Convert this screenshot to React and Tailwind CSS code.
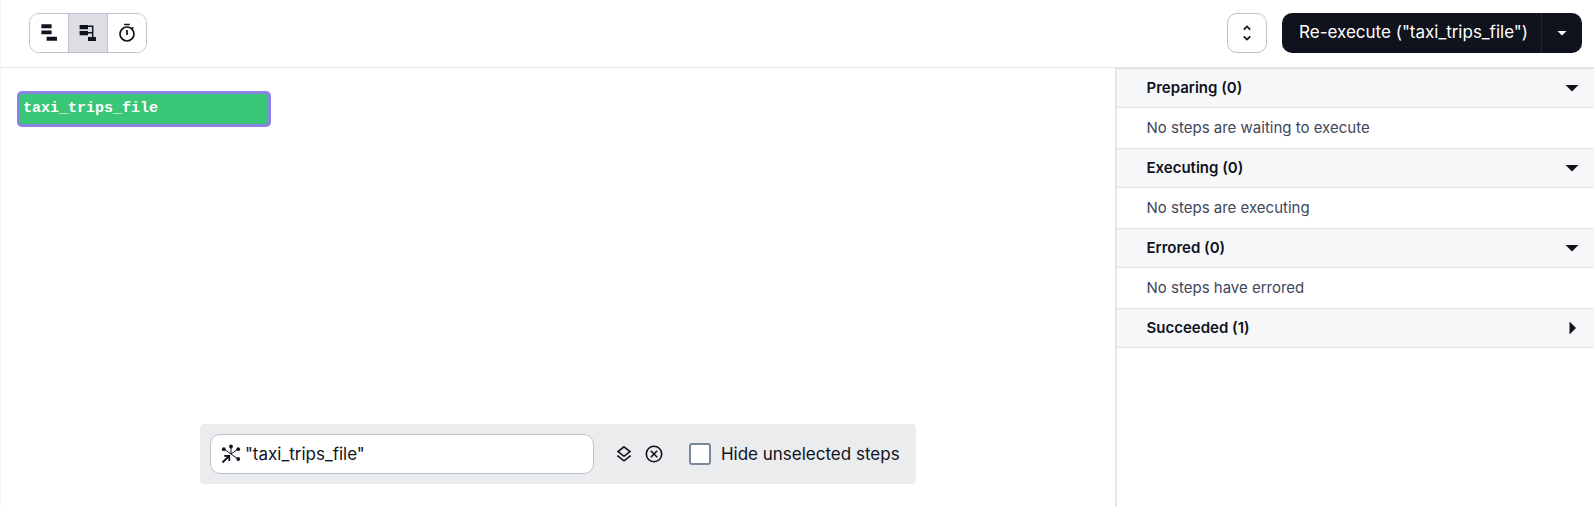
import { useState } from "react";

const INITIAL_SECTIONS = [
  { title: "Preparing", count: 0, body: "No steps are waiting to execute", open: true },
  { title: "Executing", count: 0, body: "No steps are executing", open: true },
  { title: "Errored", count: 0, body: "No steps have errored", open: true },
  { title: "Succeeded", count: 1, body: "taxi_trips_file", open: false },
];

function FlatIcon() {
  return (
    <svg width="20" height="20" viewBox="0 0 20 20" fill="currentColor" aria-hidden="true">
      <path d="M2.400 1.300h10.200v4H2.400zM2.400 7.600h10.200v3.700H2.400zM7.600 13.700H18v4H7.600z" />
    </svg>
  );
}

function WaterfallIcon() {
  return (
    <svg width="20" height="20" viewBox="0 0 20 20" aria-hidden="true">
      <path
        d="M1.600 2H10v4.300H1.600zM1.600 8H10v4.300H1.600zM10 14h8v4h-8z"
        fill="currentColor"
      />
      <path d="M10 3.300h4.700V14M10 9.700h4.700" fill="none" stroke="currentColor" strokeWidth="1.500" />
    </svg>
  );
}

function TimerIcon() {
  return (
    <svg width="20" height="20" viewBox="0 0 20 20" fill="none" stroke="currentColor" aria-hidden="true">
      <circle cx="10" cy="11" r="7" strokeWidth="1.700" />
      <path d="M7.200 1.500h5.600M10 7v5M14.800 5.600l1.600-1.200" strokeWidth="1.700" />
    </svg>
  );
}

function ExpandIcon() {
  return (
    <svg width="20" height="20" viewBox="0 0 20 20" fill="none" stroke="currentColor" strokeWidth="1.700" aria-hidden="true">
      <path d="M6.800 6.600L10 3.400l3.200 3.200M6.800 13.400l3.200 3.200 3.200-3.200" />
    </svg>
  );
}

function GraphIcon() {
  return (
    <svg width="20" height="20" viewBox="0 0 20 20" fill="none" stroke="currentColor" aria-hidden="true">
      <path d="M10 3v7l7-5M10 10l7 5M10 10L3 5" strokeWidth="1" />
      <path d="M1.500 18.500L8 12M3.200 11.800H8.300V17" strokeWidth="1.800" />
      <g fill="currentColor" stroke="none">
        <circle cx="10" cy="2.500" r="1.900" />
        <circle cx="2.800" cy="5.200" r="1.900" />
        <circle cx="17.200" cy="5.200" r="1.900" />
        <circle cx="17.200" cy="15" r="1.900" />
      </g>
    </svg>
  );
}

function LayersIcon() {
  return (
    <svg width="20" height="20" viewBox="0 0 20 20" fill="none" stroke="currentColor" strokeWidth="1.600" aria-hidden="true">
      <path d="M10 2.800l6 4.800-6 4.700-6-4.700zM3.300 11.600L10 16.800l6.700-5.200" />
    </svg>
  );
}

function ClearIcon() {
  return (
    <svg width="20" height="20" viewBox="0 0 20 20" fill="none" stroke="currentColor" strokeWidth="1.600" aria-hidden="true">
      <circle cx="10" cy="10" r="7.700" />
      <path d="M6.800 6.800l6.400 6.400M13.200 6.800l-6.400 6.400" />
    </svg>
  );
}

function Caret({ open }) {
  return (
    <svg width="20" height="20" viewBox="0 0 20 20" fill="currentColor" aria-hidden="true">
      <path d={open ? "M3.500 7h13L10 13.500z" : "M7.500 3.500v13L14 10z"} />
    </svg>
  );
}

const VIEWS = [
  { id: "flat", label: "Flat", Icon: FlatIcon },
  { id: "waterfall", label: "Waterfall", Icon: WaterfallIcon },
  { id: "timed", label: "Timed", Icon: TimerIcon },
];

function Toolbar() {
  const [view, setView] = useState("waterfall");
  return (
    <header className="flex h-[68px] shrink-0 items-center justify-between border-b border-[#e4e6ea] pr-3 pb-px pl-7">
      <div className="flex h-10 divide-x divide-[#bcc2ce] overflow-hidden rounded-[10px] border border-[#bcc2ce]">
        {VIEWS.map(({ id, label, Icon }) => (
          <button
            key={id}
            type="button"
            aria-label={label}
            aria-pressed={view === id}
            onClick={() => setView(id)}
            className={`box-content flex w-[38px] items-center justify-center ${view === id ? "bg-[#dddee4]" : "bg-white"}`}
          >
            <Icon />
          </button>
        ))}
      </div>
      <div className="flex items-center gap-[15px]">
        <button
          type="button"
          aria-label="Expand panel"
          className="flex size-10 items-center justify-center rounded-[10px] border border-[#bcc2ce] bg-white"
        >
          <ExpandIcon />
        </button>
        <div className="flex h-10 divide-x divide-[#23252f] overflow-hidden rounded-[10px] bg-[#10121d] text-white">
          <button type="button" className="w-[260px] pl-1 text-center text-[17px] whitespace-nowrap">
            Re-execute ("taxi_trips_file")
          </button>
          <button type="button" aria-label="More options" className="flex w-10 items-center justify-center">
            <svg width="20" height="20" viewBox="0 0 20 20" fill="currentColor" aria-hidden="true">
              <path d="M5.500 8h9L10 12.500z" />
            </svg>
          </button>
        </div>
      </div>
    </header>
  );
}

function StepFilter() {
  const [query, setQuery] = useState('"taxi_trips_file"');
  const [hide, setHide] = useState(false);
  return (
    <div className="flex h-[60px] items-center rounded bg-[#ebecee] pr-4 pl-[10px]">
      <label className="flex h-10 w-96 items-center gap-1 rounded-[10px] border border-[#bcc2ce] bg-white px-[10px]">
        <GraphIcon />
        <input
          type="text"
          aria-label="Step selection"
          value={query}
          onChange={(e) => setQuery(e.target.value)}
          className="min-w-0 flex-1 bg-transparent pt-0.5 text-[17px] outline-none"
        />
      </label>
      <div className="ml-5 flex gap-[10px]">
        <button type="button" aria-label="Graph layers">
          <LayersIcon />
        </button>
        <button type="button" aria-label="Clear selection" onClick={() => setQuery("")}>
          <ClearIcon />
        </button>
      </div>
      <label className="ml-[25px] flex items-center gap-[10px] text-[17px] whitespace-nowrap">
        <input
          type="checkbox"
          checked={hide}
          onChange={(e) => setHide(e.target.checked)}
          className="size-[22px] appearance-none rounded-[3px] border-2 border-[#7b889b] bg-white checked:bg-[#7b889b]"
        />
        <span className="pt-0.5">Hide unselected steps</span>
      </label>
    </div>
  );
}

function StepSections() {
  const [sections, setSections] = useState(INITIAL_SECTIONS);
  const toggle = (title) =>
    setSections((all) => all.map((s) => (s.title === title ? { ...s, open: !s.open } : s)));
  return (
    <aside className="w-[30.1%] shrink-0 border-l-2 border-[#e4e6ea]">
      {sections.map((s) => (
        <section key={s.title}>
          <h2>
            <button
              type="button"
              aria-expanded={s.open}
              onClick={() => toggle(s.title)}
              className="flex h-10 w-full items-center justify-between border-y border-[#dbdfe6] bg-[#f5f7f9] pr-3 pl-[30px] text-[15px] font-semibold"
            >
              {s.title} ({s.count})
              <Caret open={s.open} />
            </button>
          </h2>
          {s.open && <p className="flex h-10 items-center pt-px pl-[30px] text-[15px] text-[#414659]">{s.body}</p>}
        </section>
      ))}
    </aside>
  );
}

export default function App() {
  return (
    <div className="flex h-screen flex-col border-l border-[#f3f4f6] bg-white font-['Inter','Liberation_Sans',sans-serif] text-[#10121d]">
      <Toolbar />
      <div className="flex min-h-0 flex-1">
        <main className="flex flex-1 flex-col justify-between pt-[23px] pb-[23px]">
          <div className="pl-4">
            <button
              type="button"
              className="flex h-9 w-[254px] rounded-[5px] border-[3px] border-[#8b82e6] bg-[#39c676] px-[3px] pt-1 text-left font-['Liberation_Mono',monospace] text-[15px] font-bold text-white"
            >
              taxi_trips_file
            </button>
          </div>
          <div className="flex justify-center">
            <StepFilter />
          </div>
        </main>
        <StepSections />
      </div>
    </div>
  );
}
